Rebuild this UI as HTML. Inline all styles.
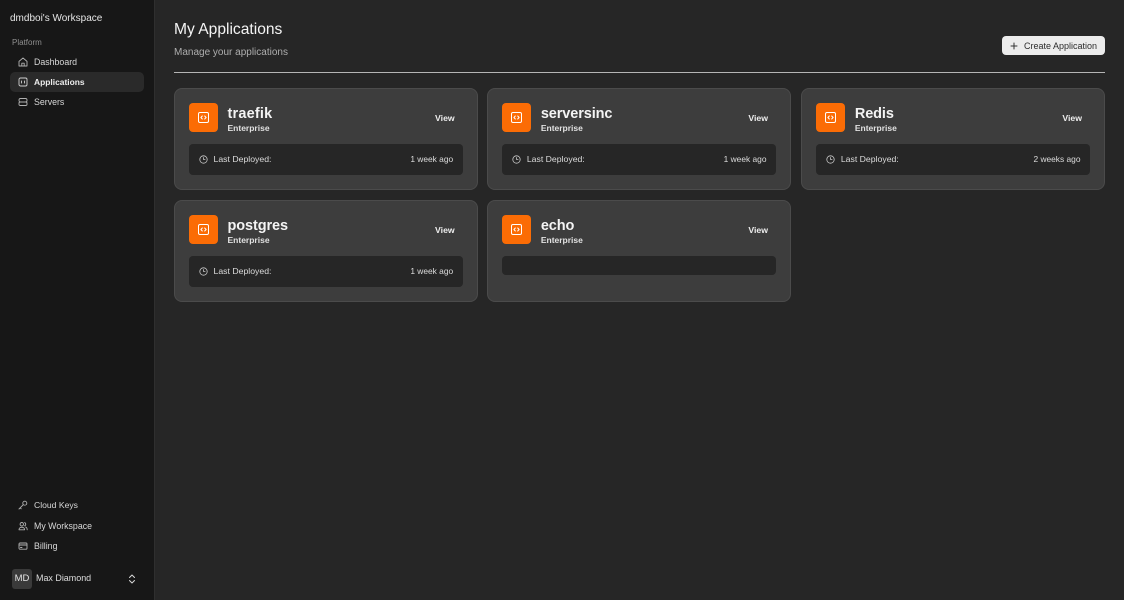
<!DOCTYPE html>
<html><head><meta charset="utf-8">
<style>
*{box-sizing:border-box;margin:0;padding:0}
html,body{width:1124px;height:600px;overflow:hidden;background:#262626}
body{font-family:"Liberation Sans",sans-serif;color:#eee;position:relative}
.a{position:absolute;white-space:nowrap}
.side{position:absolute;left:0;top:0;width:155px;height:600px;background:#171717;border-right:1px solid #2f2f2f}
.nav{font-size:8.8px;line-height:12px;color:#d8d8d8;left:34px}
svg{position:absolute;fill:none;stroke:currentColor;stroke-linecap:round;stroke-linejoin:round}
.ni{color:#b0b0b0;left:18px}
.card{position:absolute;width:303.67px;height:102px;background:#3d3d3d;border:1px solid #4b4b4b;border-radius:8px}
.ic{position:absolute;left:14px;top:14px;width:29px;height:29px;background:#fb6c05;border-radius:4px}
.ic svg{left:8px;top:7.500px;color:#fff}
.name{position:absolute;left:52.500px;top:16px;font-size:14.500px;line-height:18px;font-weight:700;color:#f4f4f4;letter-spacing:-.1px;white-space:nowrap}
.ent{position:absolute;left:52.500px;top:34px;font-size:8.500px;line-height:11px;font-weight:700;color:#e2e2e2;white-space:nowrap}
.view{position:absolute;right:22px;top:23px;font-size:8.700px;line-height:12px;font-weight:700;color:#eee;white-space:nowrap}
.bar{position:absolute;left:14px;top:55px;width:273.670px;height:31px;background:#262626;border-radius:4px}
.bar svg{left:9.500px;top:11px;color:#c8c8c8}
.ld{position:absolute;left:24.500px;top:9px;font-size:8.700px;line-height:12px;color:#dcdcdc;white-space:nowrap}
.ago{position:absolute;right:9.500px;top:9px;font-size:8.400px;line-height:12px;color:#dcdcdc;white-space:nowrap}
</style></head><body>
<div class="side"></div>
<div class="a" style="left:10px;top:11px;font-size:10px;line-height:13px;color:#e6e6e6;padding-top:.5px">dmdboi's Workspace</div>
<div class="a" style="left:12px;top:38px;font-size:8px;line-height:10px;color:#8f8f8f">Platform</div>
<div class="a" style="left:10px;top:72px;width:134px;height:20px;background:#2a2a2a;border-radius:5px"></div>

<svg class="ni" style="top:57px" width="10" height="10" viewBox="0 0 10 10" stroke-width=".9"><path d="M1 4.400 5 1l4 3.400V9H1zM3.800 9V6.200h2.400V9"/></svg>
<div class="a nav" style="top:56px">Dashboard</div>
<svg class="ni" style="top:77px;color:#d0d0d0" width="10" height="10" viewBox="0 0 10 10" stroke-width=".9"><rect x="1" y="1" width="8" height="8" rx="1.500"/><path d="M3.500 4v2M6.500 4v2"/></svg>
<div class="a nav" style="top:76px;font-weight:700;color:#eee;font-size:8.450px">Applications</div>
<svg class="ni" style="top:97px" width="10" height="10" viewBox="0 0 10 10" stroke-width=".9"><rect x="1" y="1.500" width="8" height="3.500" rx="1.500"/><rect x="1" y="5" width="8" height="3.500" rx="1.200"/></svg>
<div class="a nav" style="top:96px">Servers</div>

<svg class="ni" style="top:500px" width="10" height="10" viewBox="0 0 10 10" stroke-width=".9"><circle cx="6.800" cy="3.200" r="2"/><path d="M5.300 4.700 1 9M2.200 7.800l1 1"/></svg>
<div class="a nav" style="top:499px;font-size:8.600px">Cloud Keys</div>
<svg class="ni" style="top:521px" width="10" height="10" viewBox="0 0 10 10" stroke-width=".9"><circle cx="3.800" cy="3.200" r="1.700"/><path d="M1 8.800c0-3.400 5.600-3.400 5.600 0zM6.600 1.600a1.700 1.700 0 0 1 0 3.200M7.600 6c1 .4 1.600 1.400 1.600 2.800"/></svg>
<div class="a nav" style="top:520px">My Workspace</div>
<svg class="ni" style="top:541px" width="10" height="10" viewBox="0 0 10 10" stroke-width=".9"><rect x="1" y="2" width="8" height="6.200" rx="1"/><path d="M1 4h8M2.500 6.500h1.500"/></svg>
<div class="a nav" style="top:540px">Billing</div>

<div class="a" style="left:12px;top:569px;width:20px;height:20px;background:#3a3a3a;border-radius:3px;font-size:9.500px;line-height:20px;text-align:center;color:#e4e4e4">MD</div>
<div class="a" style="left:36px;top:572px;font-size:8.950px;line-height:12px;color:#dedede">Max Diamond</div>
<svg style="left:128px;top:574px;color:#d8d8d8" width="8" height="10" viewBox="0 0 8 10" stroke-width="1"><path d="M1.500 3.500 4 1l2.500 2.500M1.500 6.500 4 9l2.500-2.500"/></svg>

<div class="a" style="left:174px;top:20px;font-size:15.600px;line-height:19px;color:#f4f4f4">My Applications</div>
<div class="a" style="left:174px;top:45px;font-size:10px;line-height:13px;color:#aeaeae;padding-top:1px">Manage your applications</div>
<div class="a" style="left:174px;top:72px;width:931px;height:1px;background:#b5b5b5"></div>

<div class="a" style="left:1002px;top:36px;width:103px;height:19px;background:#ececec;border-radius:4px"></div>
<svg style="left:1010px;top:42px;color:#333" width="8" height="8" viewBox="0 0 8 8" stroke-width="1"><path d="M4 1v6M1 4h6"/></svg>
<div class="a" style="left:1024px;top:40px;font-size:9px;line-height:12px;color:#2c2c2c">Create Application</div>

<div class="card" style="left:174px;top:88px">
 <div class="ic"><svg width="13" height="13" viewBox="0 0 13 13" stroke-width="1"><rect x="1.500" y="1.500" width="10" height="10" rx="1.500"/><path d="M5.300 5 3.900 6.500l1.400 1.500M7.700 5l1.400 1.500L7.700 8"/></svg></div>
 <div class="name" style="letter-spacing:.2px">traefik</div><div class="ent">Enterprise</div><div class="view">View</div>
 <div class="bar"><svg width="9" height="9" viewBox="0 0 9 9" stroke-width=".8"><circle cx="4.500" cy="4.500" r="3.700"/><path d="M4.500 2.500v2h1.600"/></svg><div class="ld">Last Deployed:</div><div class="ago">1 week ago</div></div>
</div>
<div class="card" style="left:487.330px;top:88px">
 <div class="ic"><svg width="13" height="13" viewBox="0 0 13 13" stroke-width="1"><rect x="1.500" y="1.500" width="10" height="10" rx="1.500"/><path d="M5.300 5 3.900 6.500l1.400 1.500M7.700 5l1.400 1.500L7.700 8"/></svg></div>
 <div class="name">serversinc</div><div class="ent">Enterprise</div><div class="view">View</div>
 <div class="bar"><svg width="9" height="9" viewBox="0 0 9 9" stroke-width=".8"><circle cx="4.500" cy="4.500" r="3.700"/><path d="M4.500 2.500v2h1.600"/></svg><div class="ld">Last Deployed:</div><div class="ago">1 week ago</div></div>
</div>
<div class="card" style="left:801.330px;top:88px">
 <div class="ic"><svg width="13" height="13" viewBox="0 0 13 13" stroke-width="1"><rect x="1.500" y="1.500" width="10" height="10" rx="1.500"/><path d="M5.300 5 3.900 6.500l1.400 1.500M7.700 5l1.400 1.500L7.700 8"/></svg></div>
 <div class="name">Redis</div><div class="ent">Enterprise</div><div class="view">View</div>
 <div class="bar"><svg width="9" height="9" viewBox="0 0 9 9" stroke-width=".8"><circle cx="4.500" cy="4.500" r="3.700"/><path d="M4.500 2.500v2h1.600"/></svg><div class="ld">Last Deployed:</div><div class="ago">2 weeks ago</div></div>
</div>
<div class="card" style="left:174px;top:200px">
 <div class="ic"><svg width="13" height="13" viewBox="0 0 13 13" stroke-width="1"><rect x="1.500" y="1.500" width="10" height="10" rx="1.500"/><path d="M5.300 5 3.900 6.500l1.400 1.500M7.700 5l1.400 1.500L7.700 8"/></svg></div>
 <div class="name">postgres</div><div class="ent">Enterprise</div><div class="view">View</div>
 <div class="bar"><svg width="9" height="9" viewBox="0 0 9 9" stroke-width=".8"><circle cx="4.500" cy="4.500" r="3.700"/><path d="M4.500 2.500v2h1.600"/></svg><div class="ld">Last Deployed:</div><div class="ago">1 week ago</div></div>
</div>
<div class="card" style="left:487.330px;top:200px">
 <div class="ic"><svg width="13" height="13" viewBox="0 0 13 13" stroke-width="1"><rect x="1.500" y="1.500" width="10" height="10" rx="1.500"/><path d="M5.300 5 3.900 6.500l1.400 1.500M7.700 5l1.400 1.500L7.700 8"/></svg></div>
 <div class="name">echo</div><div class="ent">Enterprise</div><div class="view">View</div>
 <div class="bar" style="height:19px"></div>
</div>
</body></html>
